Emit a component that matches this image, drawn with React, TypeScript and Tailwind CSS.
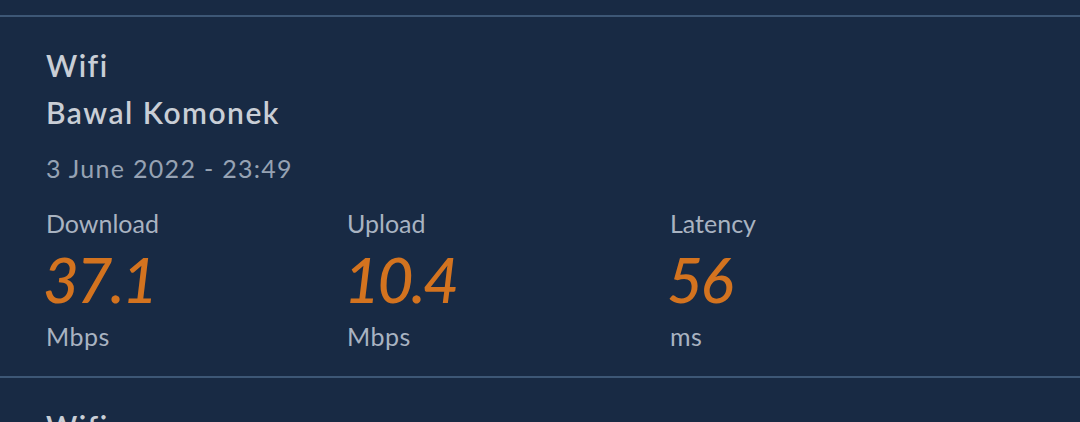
import React from 'react';

const results = [
  {
    type: 'Wifi',
    name: 'Bawal Komonek',
    date: '3 June 2022 - 23:49',
    download: '37.1',
    upload: '10.4',
    latency: '56',
  },
  {
    type: 'Wifi',
    name: 'Bawal Komonek',
    date: '2 June 2022 - 21:12',
    download: '35.8',
    upload: '9.7',
    latency: '61',
  },
];

function Stat({ label, value, unit, width }: { label: string; value: string; unit: string; width: string }) {
  return (
    <div className={`flex flex-col ${width}`}>
      <span className="text-[25px] leading-[30px] tracking-[0px] text-[#a9b3c1]">{label}</span>
      <span className="mt-[10px] text-[62px] leading-[62px] italic font-medium tracking-[-2.5px] text-[#d3731f] -ml-[3px]">
        {value}
      </span>
      <span className="mt-[11px] text-[25px] leading-[30px] tracking-[0.5px] text-[#a9b3c1]">{unit}</span>
    </div>
  );
}

export default function App() {
  return (
    <div className="w-[1080px] h-[422px] overflow-hidden bg-[#182a44] font-['Lato',sans-serif]">
      <div className="h-[15px]" />
      {results.map((r, i) => (
        <div key={i} className="border-t-2 border-[#3d5776]">
          <div className="pl-[46px] pt-[30px] pb-[25px]">
            <div className="text-[30px] leading-[36px] font-semibold tracking-[1.5px] text-[#c9ced6]">{r.type}</div>
            <div className="mt-[11px] text-[30px] leading-[36px] font-semibold tracking-[1.5px] text-[#c9ced6]">{r.name}</div>
            <div className="mt-[23px] text-[25px] leading-[30px] tracking-[1.3px] text-[#96a2b3]">{r.date}</div>
            <div className="mt-[25px] flex">
              <Stat label="Download" value={r.download} unit="Mbps" width="w-[301px]" />
              <Stat label="Upload" value={r.upload} unit="Mbps" width="w-[323px]" />
              <Stat label="Latency" value={r.latency} unit="ms" width="w-[200px]" />
            </div>
          </div>
        </div>
      ))}
    </div>
  );
}
